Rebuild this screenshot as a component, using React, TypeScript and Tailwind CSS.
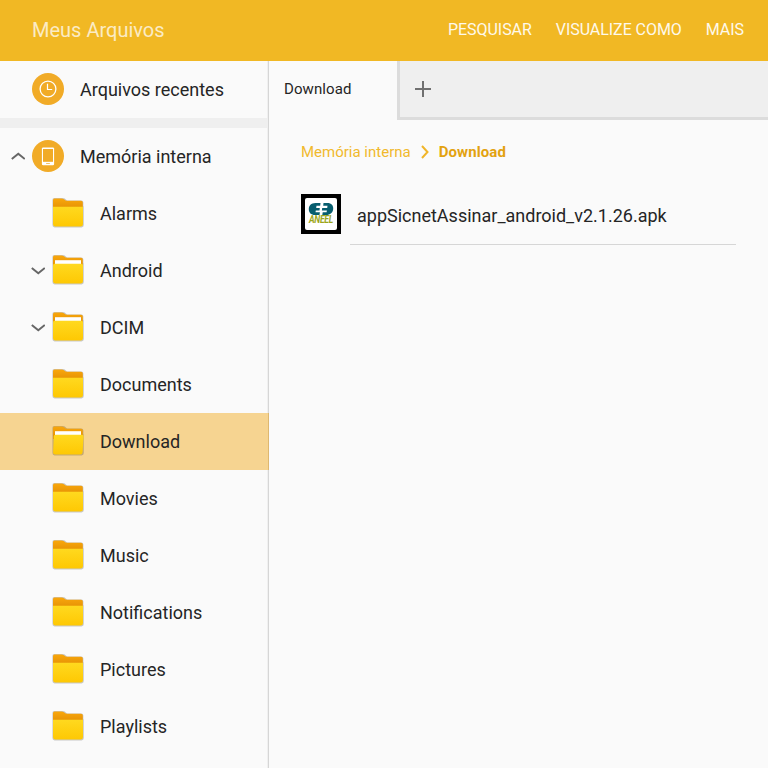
type Folder = { name: string; expandable?: boolean; kind: "plain" | "filled" | "open" };

const folders: Folder[] = [
  { name: "Alarms", kind: "plain" },
  { name: "Android", kind: "filled", expandable: true },
  { name: "DCIM", kind: "filled", expandable: true },
  { name: "Documents", kind: "plain" },
  { name: "Download", kind: "open" },
  { name: "Movies", kind: "plain" },
  { name: "Music", kind: "plain" },
  { name: "Notifications", kind: "plain" },
  { name: "Pictures", kind: "plain" },
  { name: "Playlists", kind: "plain" },
];

function FolderIcon({ kind }: { kind: Folder["kind"] }) {
  return (
    <svg width="32" height="32" viewBox="0 0 32 32" className="mb-px block shrink-0">
      <defs>
        <linearGradient id="front" x1="0" y1="0" x2="0" y2="1">
          <stop offset="0" stopColor="#ffd91f" />
          <stop offset="1" stopColor="#fec803" />
        </linearGradient>
        <linearGradient id="back" x1="0" y1="0" x2="0" y2="1">
          <stop offset="0" stopColor="#f9a70b" />
          <stop offset="1" stopColor="#e08c04" />
        </linearGradient>
      </defs>
      <path d="M.4 3Q.4 1 2.200 1H11q1 0 1.800.6l2.200 2h14.400q2 0 2 1.800V9q.4 0 .4 1.200V28q0 2.400-2.200 2.400H2.600Q.4 30.400.4 28z" fill="#000" opacity=".2" />
      <path d="M1 3.200q0-1.700 1.500-1.700H9.500q1.500 0 2.500.8 1.500 1.500 3.500 1.500h13.600q1.700 0 1.700 1.600V14H1z" fill="url(#back)" />
      {kind !== "plain" && <rect x="3" y="6.200" width="26" height="8" fill="#fff" />}
      {kind === "plain" && <path d="M1 9.800h30V27q0 2.500-2.400 2.500H3.400Q1 29.500 1 27z" fill="url(#front)" />}
      {kind === "filled" && <path d="M1 11.300q0-1.500 1.500-1.500h27q1.500 0 1.500 1.500v15.700q0 2.500-2.400 2.500H3.400Q1 29.500 1 27z" fill="url(#front)" />}
      {kind === "open" && <path d="M1.800 11.300q.1-1.500 1.600-1.500h26.800q1.500 0 1.400 1.500L30.600 27q-.1 2.500-2.400 2.500H3.400Q1 29.500 1.100 27z" fill="url(#front)" />}
    </svg>
  );
}

function Chevron({ up = false }: { up?: boolean }) {
  return (
    <svg width="14" height="8" viewBox="0 0 14 8" fill="none" stroke="#666" strokeWidth="2" className={up ? "-ml-px mb-px block" : "-ml-px block"}>
      <path d={up ? "M.8 7 7.300 1.800 13.800 7" : "M.8 1 7.300 6.200 13.800 1"} />
    </svg>
  );
}

function ClockIcon() {
  return (
    <svg width="32" height="32" viewBox="0 0 32 32" className="mb-px block shrink-0" fill="none">
      <circle cx="16" cy="16" r="16" fill="#f1ab27" />
      <circle cx="16" cy="16" r="7.900" stroke="#fff" strokeWidth="1.300" />
      <path d="M15.500 10.700v5.800h4.700" stroke="#fff" strokeWidth="1.200" />
    </svg>
  );
}

function TabletIcon() {
  return (
    <svg width="32" height="32" viewBox="0 0 32 32" className="mb-px block shrink-0">
      <circle cx="16" cy="16" r="16" fill="#f1ab27" />
      <rect x="9.900" y="7.400" width="12.200" height="17.800" rx="1.200" fill="#fff" />
      <rect x="11" y="9" width="10" height="12.800" fill="#f1ab27" />
      <rect x="14" y="23" width="4" height="1" rx=".5" fill="#f1ab27" opacity=".7" />
    </svg>
  );
}

function AneelIcon() {
  return (
    <div className="flex size-10 shrink-0 flex-col items-center bg-black p-1">
      <div className="flex size-8 flex-col items-center rounded-[2px] bg-white pt-[5px]">
        <svg width="26" height="12" viewBox="0 0 26 12" fill="#075d6e" className="block shrink-0">
          <path d="M12.500 0H7.500C3 0 .8 2.800.8 6.200S3 12 7 12h4.500l.4-2.700H7.500L7.800 7.400h3.700L11.800 5H8.200l.3-2.200h3.700z" />
          <path d="M15.500 0h3.800c4.200 0 6.200 2.600 5.900 6-.3 3.500-3 6-7.100 6h-3.800l.4-2.700h3.900l.3-1.900h-5L14.200 5h5l.3-2.200h-4.300z" />
        </svg>
        <span className="scale-x-[0.86] text-[10px] leading-[10px] font-bold tracking-[-0.3px] text-[#9ca51b] italic">ANEEL</span>
      </div>
    </div>
  );
}

export default function App() {
  return (
    <div className="flex h-screen w-full flex-col overflow-hidden bg-[#fafafa] font-['Roboto',sans-serif] text-[#252525]">
      <header className="flex h-[61px] shrink-0 items-center justify-between bg-[#f1b824] pr-6 pb-0.5 pl-8">
        <h1 className="text-[20px] leading-6 text-[#fbebc4]">Meus Arquivos</h1>
        <nav className="flex gap-6 text-[16px] leading-6 tracking-[-0.05px] text-[#fef9ec]">
          <button>PESQUISAR</button>
          <button>VISUALIZE COMO</button>
          <button>MAIS</button>
        </nav>
      </header>
      <div className="flex min-h-0 flex-1">
        <aside className="flex w-[269px] shrink-0 flex-col border-r border-[#d6d6d6] text-[18px] leading-6 shadow-[inset_-1px_0_0_#f0f0f0]">
          <div className="flex h-[57px] shrink-0 items-center gap-4 pl-8">
            <ClockIcon />
            <span>Arquivos recentes</span>
          </div>
          <div className="h-[10px] shrink-0 bg-[#efefef]" />
          <div className="flex h-[57px] shrink-0 items-center pl-3">
            <div className="w-5">
              <Chevron up />
            </div>
            <TabletIcon />
            <span className="ml-4">Memória interna</span>
          </div>
          {folders.map((f) => (
            <div
              key={f.name}
              className={`flex h-[57px] shrink-0 items-center pl-8 ${f.kind === "open" ? "-mr-px border-r border-[#deb870] bg-[#f6d491]" : ""}`}
            >
              <div className="w-5">{f.expandable && <Chevron />}</div>
              <FolderIcon kind={f.kind} />
              <span className="ml-4">{f.name}</span>
            </div>
          ))}
        </aside>
        <main className="min-w-0 flex-1">
          <div className="flex h-[59px]">
            <div className="flex w-32 items-center pb-[3px] pl-[15px] text-[15px] leading-5 tracking-[0.1px]">Download</div>
            <div className="flex flex-1 items-center border-b-[3px] border-l-[3px] border-[#dcdcdc] bg-[#efefef] pl-[15px]">
              <svg width="16" height="16" viewBox="0 0 16 16" fill="#707070" className="block">
                <path d="M7 0h2v7h7v2H9v7H7V9H0V7h7z" />
              </svg>
            </div>
          </div>
          <div className="flex items-center pt-[22px] pl-8 text-[15px] leading-5">
            <span className="text-[#f1b92d]">Memória interna</span>
            <svg width="8" height="14" viewBox="0 0 8 14" fill="none" stroke="#f0b529" strokeWidth="2" className="mr-2.5 ml-2.5 block">
              <path d="M1 1l5.500 6L1 13" />
            </svg>
            <span className="font-bold tracking-[0.1px] text-[#e3a20f]">Download</span>
          </div>
          <div className="flex gap-4 pt-8 pl-8">
            <AneelIcon />
            <span className="pt-[10px] text-[18px] leading-6">appSicnetAssinar_android_v2.1.26.apk</span>
          </div>
          <div className="mt-[10px] mr-8 ml-[81px] h-px bg-[#d6d6d6]" />
        </main>
      </div>
    </div>
  );
}
